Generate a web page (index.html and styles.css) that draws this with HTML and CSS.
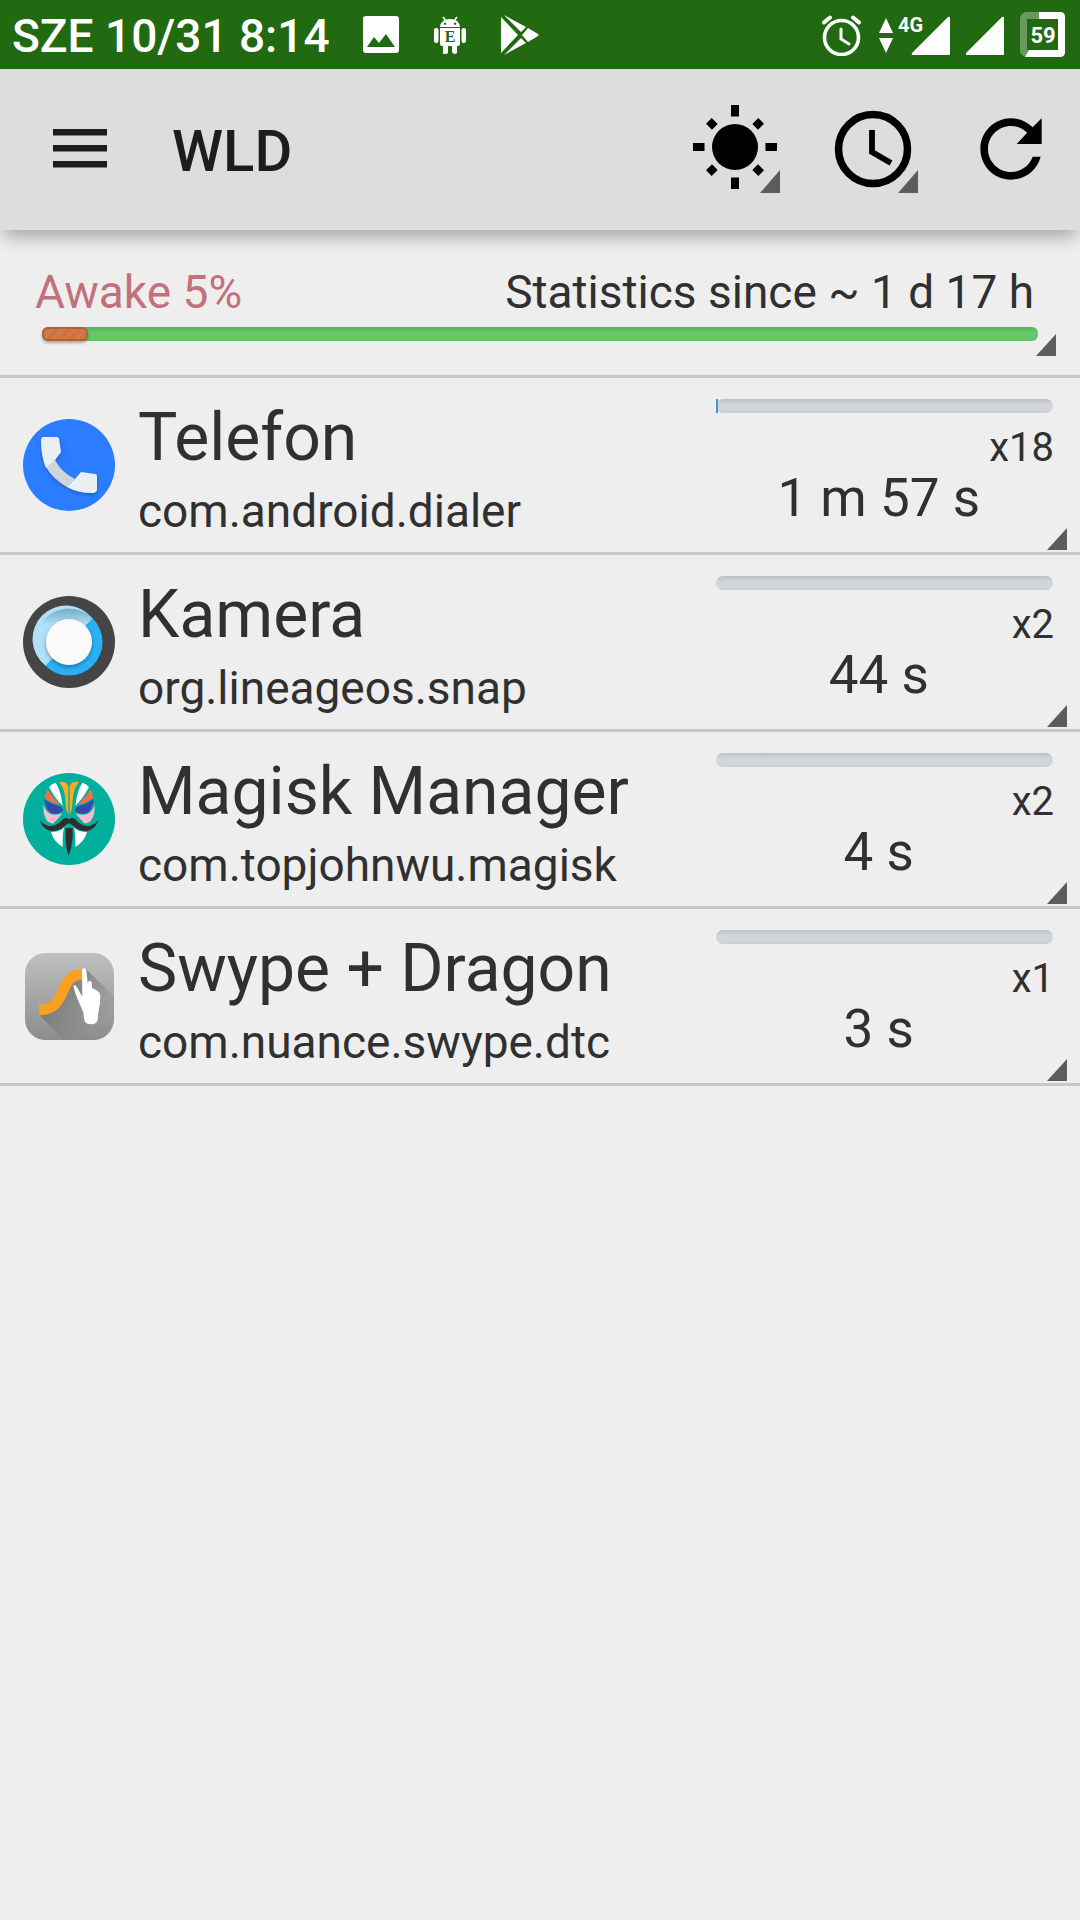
FILE: index.html
```html
<!DOCTYPE html>
<html lang="en">
<head>
    <meta charset="UTF-8">
    <meta name="viewport" content="width=device-width, initial-scale=1.0">
    <title>WLD</title>
    <link rel="stylesheet" href="styles.css">
</head>
<body>

    <!-- Status bar -->
    <div class="status-bar">
        <span class="status-clock">SZE 10/31 8:14</span>
        <div class="status-left">
            <svg width="38" height="42" viewBox="0 0 38 42" fill="#fff">
                <path fill-rule="evenodd" d="M4 2h30q3 0 3 3v31q0 3-3 3H4q-3 0-3-3V5q0-3 3-3zM5 33h28l-9-13-7 9-5-6z"/>
            </svg>
            <svg width="34" height="42" viewBox="0 0 34 42" fill="#fff">
                <path d="M10 3l3 4M24 3l-3 4" stroke="#fff" stroke-width="1.6" fill="none"/>
                <path fill-rule="evenodd" d="M7 13q1-8 10-8t10 8zM12 8.500a1.200 1.200 0 1 0 .1 0zM22 8.500a1.200 1.200 0 1 0 .1 0z"/>
                <path d="M7 14h20v16q0 2-2 2h-1v6q0 2-2 2t-3-2v-6h-4v6q0 2-3 2t-2-2v-6H9q-2 0-2-2z"/>
                <rect x="1" y="14" width="4.500" height="15" rx="2.200"/>
                <rect x="28.500" y="14" width="4.500" height="15" rx="2.200"/>
                <text class="robot-letter" x="17" y="28" text-anchor="middle">E</text>
            </svg>
            <svg width="40" height="42" viewBox="0 0 40 42" fill="#fff">
                <path d="M1 3v36l17-18zM4 1l17 17 5-5zM4 41l17-17 5 5zM28 14l-6 7 6 7 10-6q1-1 0-2z"/>
            </svg>
        </div>
        <div class="status-right">
            <svg width="40" height="42" viewBox="0 0 40 42" fill="none" stroke="#fff" stroke-linecap="round">
                <circle cx="19.500" cy="23.500" r="17" stroke-width="3.600"/>
                <path d="M2 8.500l6-5M37 8.500l-6-5" stroke-width="4"/>
                <path d="M19 15v10l8 5" stroke-width="3"/>
            </svg>
            <svg width="72" height="46" viewBox="0 -2 72 46" fill="#fff">
                <path d="M8 4l7 15H1zM1 24h14L8 39z"/>
                <text class="network" x="20" y="18">4G</text>
                <path d="M70 3q2-1 2 1v36q0 1-1 1H35q-2 0-1-2z"/>
            </svg>
            <svg width="38" height="42" viewBox="0 0 38 42" fill="#fff">
                <path d="M36 3q2-1 2 1v36q0 1-1 1H1q-2 0-1-2z"/>
            </svg>
            <svg width="46" height="46" viewBox="0 0 46 46">
                <rect x="3.500" y="3.500" width="38" height="38" rx="3" fill="none" stroke="#69995f" stroke-width="7"/>
                <path d="M19 0h21q5 0 5 5v35q0 5-5 5H5l4-7h29V7H19z" fill="#fff"/>
                <text class="battery" x="23" y="31" text-anchor="middle">59</text>
            </svg>
        </div>
    </div>

    <!-- Toolbar -->
    <header class="toolbar">
        <button type="button" class="menu-btn" aria-label="Menu">
            <svg width="54" height="40" viewBox="0 0 54 40" fill="#1d1d1d">
                <path d="M0 0h54v6.500H0zM0 16h54v6.500H0zM0 32h54v6.500H0z"/>
            </svg>
        </button>
        <h1>WLD</h1>
        <button type="button" class="tool-btn" aria-label="Wakelock type">
            <svg width="92" height="92" viewBox="0 0 92 92">
                <circle cx="46" cy="44" r="23"/>
                <path d="M42 2h8v11.500h-8zM42 74.500h8V86h-8zM4 40h11.500v8H4zM76.500 40H88v8H76.500z"/>
                <path d="M42 7h8v8.500h-8zM42 72.500h8V81h-8zM9 40h8.500v8H9zM74.500 40H83v8h-8.500z" transform="rotate(45 46 44)"/>
                <path d="M91 67v23H71z" fill="#5c5c5c"/>
            </svg>
        </button>
        <button type="button" class="tool-btn" aria-label="Time range">
            <svg width="92" height="92" viewBox="0 0 92 92">
                <circle cx="46" cy="46" r="34.500" fill="none" stroke="#000" stroke-width="7.500"/>
                <path d="M45 27v22l19 11" fill="none" stroke="#000" stroke-width="5.800"/>
                <path d="M91 67v23H71z" fill="#5c5c5c"/>
            </svg>
        </button>
        <button type="button" class="tool-btn" aria-label="Refresh">
            <svg width="92" height="92" viewBox="0 0 24 24">
                <path d="M17.650 6.350A7.958 7.958 0 0 0 12 4c-4.420 0-7.990 3.580-7.990 8s3.570 8 7.990 8c3.730 0 6.840-2.550 7.730-6h-2.080A5.990 5.990 0 0 1 12 18c-3.310 0-6-2.690-6-6s2.690-6 6-6c1.660 0 3.140.69 4.220 1.780L13.500 10.700H20V4l-2.350 2.350z"/>
            </svg>
        </button>
    </header>

    <main>
        <!-- Summary -->
        <section class="summary">
            <div class="summary-text">
                <span class="awake">Awake 5%</span>
                <span>Statistics since ~ 1 d 17 h</span>
            </div>
            <div class="awake-bar">
                <div class="awake-fill" style="width: 4.600%"></div>
            </div>
            <button type="button" class="corner" aria-label="Summary options"></button>
        </section>

        <!-- App list -->
        <ul class="app-list">
            <li class="app">
                <svg class="app-icon" viewBox="0 0 92 92">
                    <defs>
                        <linearGradient id="phoneShade" x1="0" y1="0" x2="1" y2="1">
                            <stop offset="0" stop-color="#1f62d8"/>
                            <stop offset=".5" stop-color="#2a7afc"/>
                        </linearGradient>
                        <filter id="phoneShadow" x="-20%" y="-20%" width="140%" height="140%">
                            <feDropShadow dx="0" dy="2" stdDeviation="1.5" flood-color="#0b3f9c" flood-opacity=".5"/>
                        </filter>
                    </defs>
                    <circle cx="46" cy="46" r="46" fill="#2c7cff"/>
                    <path d="M37 20l22 22 8 13-15 5-20-19z" fill="url(#phoneShade)" opacity=".3"/>
                    <g filter="url(#phoneShadow)">
                        <path d="M32 41q6 12 20 19l-8 8Q30 60 23 48z" fill="#cdd5da"/>
                        <path d="M21 18h13q2 0 2 2l2 13-6 8-9 8Q18 37 18 21q0-3 3-3zM52 60l6-7 14 2q2 0 2 2v13q0 4-5 4-14 0-25-6z" fill="#eceff1"/>
                    </g>
                </svg>
                <div class="app-text">
                    <h2>Telefon</h2>
                    <p>com.android.dialer</p>
                </div>
                <div class="app-usage">
                    <div class="usage-bar"><div class="usage-fill" style="width: 1%"></div></div>
                    <span class="count">x18</span>
                    <span class="time">1 m 57 s</span>
                </div>
                <button type="button" class="corner" aria-label="Telefon options"></button>
            </li>

            <li class="app">
                <svg class="app-icon" viewBox="0 0 92 92">
                    <defs>
                        <filter id="lensShadow" x="-20%" y="-20%" width="140%" height="140%">
                            <feDropShadow dx="0" dy="2" stdDeviation="2" flood-opacity=".35"/>
                        </filter>
                        <linearGradient id="lensTop" x1="0" y1="0" x2="0" y2="1">
                            <stop offset="0" stop-color="#4f87a5" stop-opacity=".6"/>
                            <stop offset=".25" stop-color="#4f87a5" stop-opacity="0"/>
                        </linearGradient>
                    </defs>
                    <circle cx="46" cy="46" r="46" fill="#454545"/>
                    <circle cx="46" cy="46" r="33.500" fill="#29b1f5"/>
                    <path d="M69.500 22.500A33.500 33.500 0 1 0 22.500 69.500z" fill="#b1e1fa"/>
                    <circle cx="46" cy="46" r="33.500" fill="url(#lensTop)"/>
                    <circle cx="46" cy="46" r="23" fill="#fafafa" filter="url(#lensShadow)"/>
                </svg>
                <div class="app-text">
                    <h2>Kamera</h2>
                    <p>org.lineageos.snap</p>
                </div>
                <div class="app-usage">
                    <div class="usage-bar"></div>
                    <span class="count">x2</span>
                    <span class="time">44 s</span>
                </div>
                <button type="button" class="corner" aria-label="Kamera options"></button>
            </li>

            <li class="app">
                <svg class="app-icon" viewBox="39 39 276 276">
                    <circle cx="177" cy="177" r="138" fill="#00af9c"/>
                    <g id="mask-half">
                        <path d="M147 66q22-4 28 12v86q-8-12-9-44-1-32-19-54z" fill="#f6ac23"/>
                        <path d="M117 81q10-10 20-13 15 22 21 69-22-20-41-56z" fill="#fff"/>
                        <path d="M113 88q9 20 38 46-30-6-46-19 1-17 8-27z" fill="#ff6e40"/>
                        <path d="M103 116q14 14 44 22 11 4 12 14-10 10-31 9-21-7-25-45z" fill="#3747ae"/>
                        <path d="M100 134q7 22 25 29 17 4 32-3-9 14-28 31-10-1-17-8-14-20-12-49z" fill="#f8bcd0"/>
                        <path d="M123 216q23 0 39-13-5 16-4 58-26-15-35-45z" fill="#fff"/>
                        <path d="M177 178q-9-7-18-1-16 20-37 21-17 0-33-18 6 21 24 30 20 7 40-4 14-11 24-17z" fill="#2e2e2e"/>
                    </g>
                    <use href="#mask-half" transform="translate(354) scale(-1 1)"/>
                    <path d="M166 205q11-4 22 0v27q-2 30-12 56-9-22-9-56z" fill="#2e2e2e"/>
                </svg>
                <div class="app-text">
                    <h2>Magisk Manager</h2>
                    <p>com.topjohnwu.magisk</p>
                </div>
                <div class="app-usage">
                    <div class="usage-bar"></div>
                    <span class="count">x2</span>
                    <span class="time">4 s</span>
                </div>
                <button type="button" class="corner" aria-label="Magisk Manager options"></button>
            </li>

            <li class="app">
                <svg class="app-icon" viewBox="39 30 276 276">
                    <defs>
                        <linearGradient id="tile" x1="0" y1="0" x2="0" y2="1">
                            <stop offset="0" stop-color="#bfc0c0"/>
                            <stop offset="1" stop-color="#8b8c8c"/>
                        </linearGradient>
                        <linearGradient id="tileShadow" x1="0" y1="0" x2="1" y2="1">
                            <stop offset=".2" stop-color="#555" stop-opacity=".7"/>
                            <stop offset=".8" stop-color="#777" stop-opacity="0"/>
                        </linearGradient>
                    </defs>
                    <rect x="45" y="39" width="267" height="261" rx="62" fill="url(#tile)"/>
                    <path d="M88 225l75 75h87q62 0 62-62v-68l-84-83-50 45-30 70z" fill="url(#tileShadow)"/>
                    <path d="M87 210c90 0 55-107 130-107" fill="none" stroke="#f9a020" stroke-width="32"/>
                    <path d="M216 90q1-5 6-5t7 5l4 40q0-7 6-7t7 7v14q25 10 25 23 0 24-5 45-3 12-2 22-1 19-21 19t-21-18q0-20-10-37-19-40-22-62 7-2 12 7l15 28z" fill="#fff"/>
                </svg>
                <div class="app-text">
                    <h2>Swype + Dragon</h2>
                    <p>com.nuance.swype.dtc</p>
                </div>
                <div class="app-usage">
                    <div class="usage-bar"></div>
                    <span class="count">x1</span>
                    <span class="time">3 s</span>
                </div>
                <button type="button" class="corner" aria-label="Swype + Dragon options"></button>
            </li>
        </ul>
    </main>

</body>
</html>
```

FILE: styles.css
```css
/* General page styling */
* {
    box-sizing: border-box;
}

body {
    margin: 0;
    min-height: 100vh;
    background-color: #eeeeee;
    color: #303030;
    font-family: Roboto, sans-serif;
}

h1, h2, p, ul {
    margin: 0;
    padding: 0;
}

svg {
    display: block;
    flex-shrink: 0;
}

button {
    background: none;
    border: none;
    padding: 0;
    cursor: pointer;
}

/* Status bar */
.status-bar {
    display: flex;
    align-items: center;
    height: 69px;
    padding: 0 14px 0 12px;
    background-color: #216a12;
    color: white;
}

.status-clock {
    padding-top: 2px;
    font-size: 46px;
    font-weight: 500;
    line-height: 54px;
}

.status-left {
    display: flex;
    gap: 33px;
    margin-left: 32px;
}

.status-right {
    display: flex;
    align-items: center;
    gap: 16px;
    margin-left: auto;
}

.robot-letter {
    font-family: "Liberation Serif", serif;
    font-size: 16px;
    font-weight: bold;
    fill: #216a12;
}

.network {
    font-size: 20px;
    font-weight: bold;
}

.battery {
    font-size: 22px;
    font-weight: bold;
    fill: white;
}

/* Toolbar */
.toolbar {
    position: relative;
    display: flex;
    align-items: center;
    height: 161px;
    padding-bottom: 2px;
    background-color: #dddddd;
    box-shadow: 0 12px 16px -4px rgba(0, 0, 0, 0.28);
}

.menu-btn {
    padding: 0 53px;
}

.toolbar h1 {
    flex: 1;
    margin-left: 12px;
    padding-top: 4px;
    color: #1d1d1d;
    font-size: 58px;
    font-weight: 500;
    line-height: 68px;
}

.tool-btn {
    padding: 0 23px;
}

/* Summary */
.summary {
    position: relative;
    padding: 35px 42px 34px;
    border-bottom: 3px solid #c8c8c8;
}

.summary-text {
    display: flex;
    justify-content: space-between;
    margin: 0 4px 8px -7px;
    font-size: 46px;
    line-height: 54px;
}

.awake {
    color: #c2717b;
}

.awake-bar {
    height: 14px;
    border-radius: 6px;
    background: linear-gradient(#52b855, #6bc670 50%, #62c367);
}

.awake-fill {
    height: 14px;
    border: 2px solid #b55f38;
    border-radius: 6px;
    background: repeating-linear-gradient(135deg, #db6e38 0 4px, #c87b56 4px 8px);
    box-shadow: 0 2px 3px rgba(0, 0, 0, 0.3);
}

.corner {
    position: absolute;
    right: 13px;
    bottom: 2px;
    width: 20px;
    height: 22px;
    background-color: #5c5c5c;
    clip-path: polygon(100% 0, 100% 100%, 0 100%);
}

.summary .corner {
    right: 24px;
    bottom: 19px;
}

/* App list */
.app-list {
    list-style: none;
}

.app {
    position: relative;
    display: flex;
    padding: 0 26px 0 23px;
    border-bottom: 3px solid #c8c8c8;
}

.app-icon {
    width: 92px;
    height: 92px;
    align-self: center;
}

.app-text {
    flex: 1;
    padding: 21px 0 14px 23px;
}

.app-text h2 {
    font-size: 66px;
    font-weight: 400;
    line-height: 78px;
}

.app-text p {
    margin-top: 7px;
    font-size: 46px;
    line-height: 54px;
}

.app-usage {
    display: flex;
    flex-direction: column;
    width: 34%;
    padding-top: 21px;
}

.usage-bar {
    height: 14px;
    margin: 0 1px 15px 13px;
    border-radius: 7px;
    background: linear-gradient(#bdc1c4, #d2d6da 40%, #d2d6da 75%, #c9ced1);
}

.usage-fill {
    height: 14px;
    max-width: 2px;
    background-color: #3d9cc4;
}

.count {
    font-size: 40px;
    line-height: 40px;
    text-align: right;
}

.time {
    font-size: 53px;
    line-height: 60px;
    text-align: center;
}
```
